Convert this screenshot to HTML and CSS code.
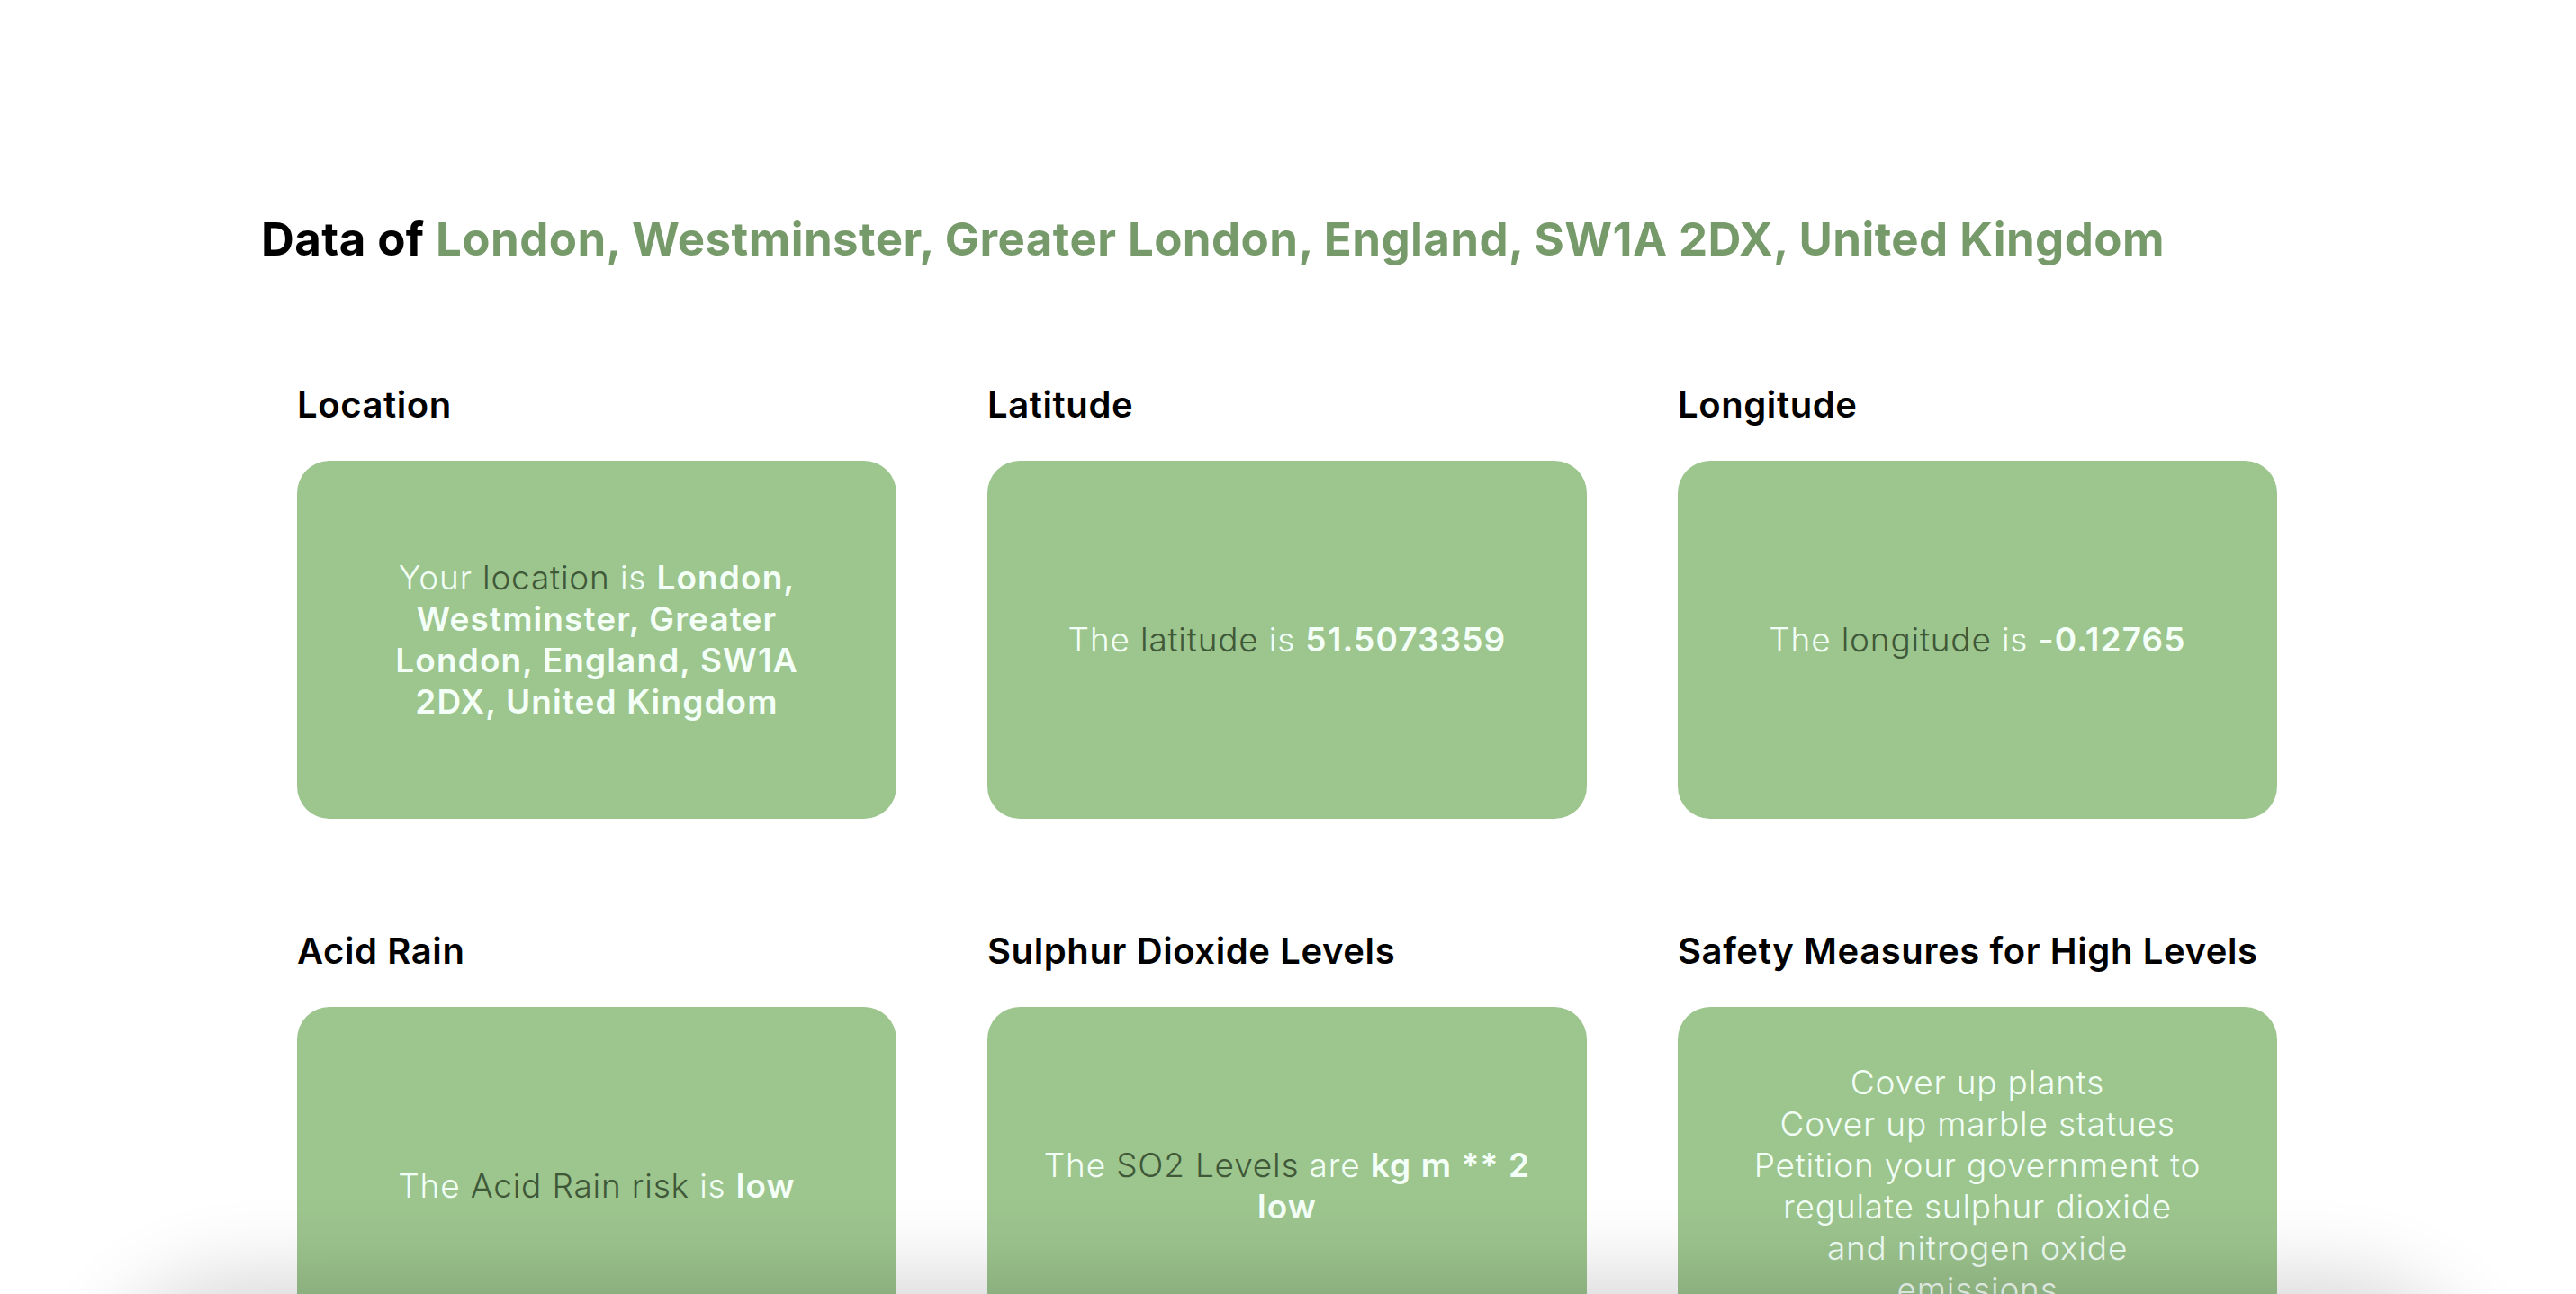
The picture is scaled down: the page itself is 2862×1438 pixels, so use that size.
FILE: index.html
```html
<!DOCTYPE html>
<html lang="en">
<head>
<meta charset="utf-8">
<title>Data of London</title>
<link rel="stylesheet" href="styles.css">
</head>
<body>
<main class="page">
  <h1 class="title">Data of <span class="place">London, Westminster, Greater London, England, SW1A 2DX, United Kingdom</span></h1>
  <section class="grid">
    <div class="item">
      <h2 class="label">Location</h2>
      <div class="card"><p class="card-text"><span class="lite">Your</span> <span class="dark">location</span> <span class="lite">is</span> <b class="val">London,<br>Westminster, Greater<br>London, England, SW1A<br>2DX, United Kingdom</b></p></div>
    </div>
    <div class="item">
      <h2 class="label">Latitude</h2>
      <div class="card"><p class="card-text"><span class="lite">The</span> <span class="dark">latitude</span> <span class="lite">is</span> <b class="val">51.5073359</b></p></div>
    </div>
    <div class="item">
      <h2 class="label">Longitude</h2>
      <div class="card"><p class="card-text"><span class="lite">The</span> <span class="dark">longitude</span> <span class="lite">is</span> <b class="val">-0.12765</b></p></div>
    </div>
    <div class="item">
      <h2 class="label">Acid Rain</h2>
      <div class="card"><p class="card-text"><span class="lite">The</span> <span class="dark">Acid Rain risk</span> <span class="lite">is</span> <b class="val">low</b></p></div>
    </div>
    <div class="item">
      <h2 class="label">Sulphur Dioxide Levels</h2>
      <div class="card"><p class="card-text"><span class="lite">The</span> <span class="dark">SO2 Levels</span> <span class="lite">are</span> <b class="val">kg m ** 2</b><br><b class="val">low</b></p></div>
    </div>
    <div class="item">
      <h2 class="label">Safety Measures for High Levels</h2>
      <div class="card"><p class="card-text lite">Cover up plants<br>Cover up marble statues<br>Petition your government to<br>regulate sulphur dioxide<br>and nitrogen oxide<br>emissions</p></div>
    </div>
  </section>
</main>
<div class="fold-shadow" aria-hidden="true"></div>
</body>
</html>
```

FILE: styles.css
```css
html, body {
  margin: 0;
  padding: 0;
  background: #ffffff;
}

body {
  font-family: "Inter", "Noto Sans", "Liberation Sans", sans-serif;
  color: #000;
}

.page {
  padding: 231px 0 0 290px;
}

.title {
  margin: 0;
  font-family: "Inter", "Liberation Sans", sans-serif;
  font-weight: 700;
  font-size: 51px;
  line-height: 70px;
  letter-spacing: 0.42px;
  color: #000;
}

.place {
  color: #779a6a;
}

.grid {
  display: grid;
  grid-template-columns: repeat(3, 666px);
  column-gap: 101px;
  row-gap: 119px;
  margin: 121px 0 0 40px;
}

.item {
  display: flex;
  flex-direction: column;
}

.label {
  margin: 0 0 34px 0;
  font-weight: 600;
  font-size: 40px;
  line-height: 56px;
  letter-spacing: 0.6px;
  color: #000;
}

.card {
  height: 398px;
  border-radius: 36px;
  background: #9dc58e;
  display: flex;
  align-items: center;
  justify-content: center;
  padding: 0 30px;
  box-sizing: border-box;
  overflow: hidden;
}

.card-text {
  margin: 0;
  text-align: center;
  font-size: 37px;
  line-height: 46px;
  letter-spacing: 0.8px;
  font-weight: 300;
  color: #f2fff6;
  white-space: nowrap;
}

.lite {
  font-weight: 300;
  color: #f2fff6;
}

.dark {
  font-weight: 300;
  color: #3f5838;
}

.val {
  font-weight: 600;
  letter-spacing: 1.1px;
  color: #f4fff8;
}

.fold-shadow {
  position: fixed;
  left: 120px;
  right: 120px;
  top: 100%;
  height: 300px;
  border-radius: 200px;
  box-shadow: 0 0 90px 20px rgba(0, 0, 0, 0.16);
  pointer-events: none;
}
```
